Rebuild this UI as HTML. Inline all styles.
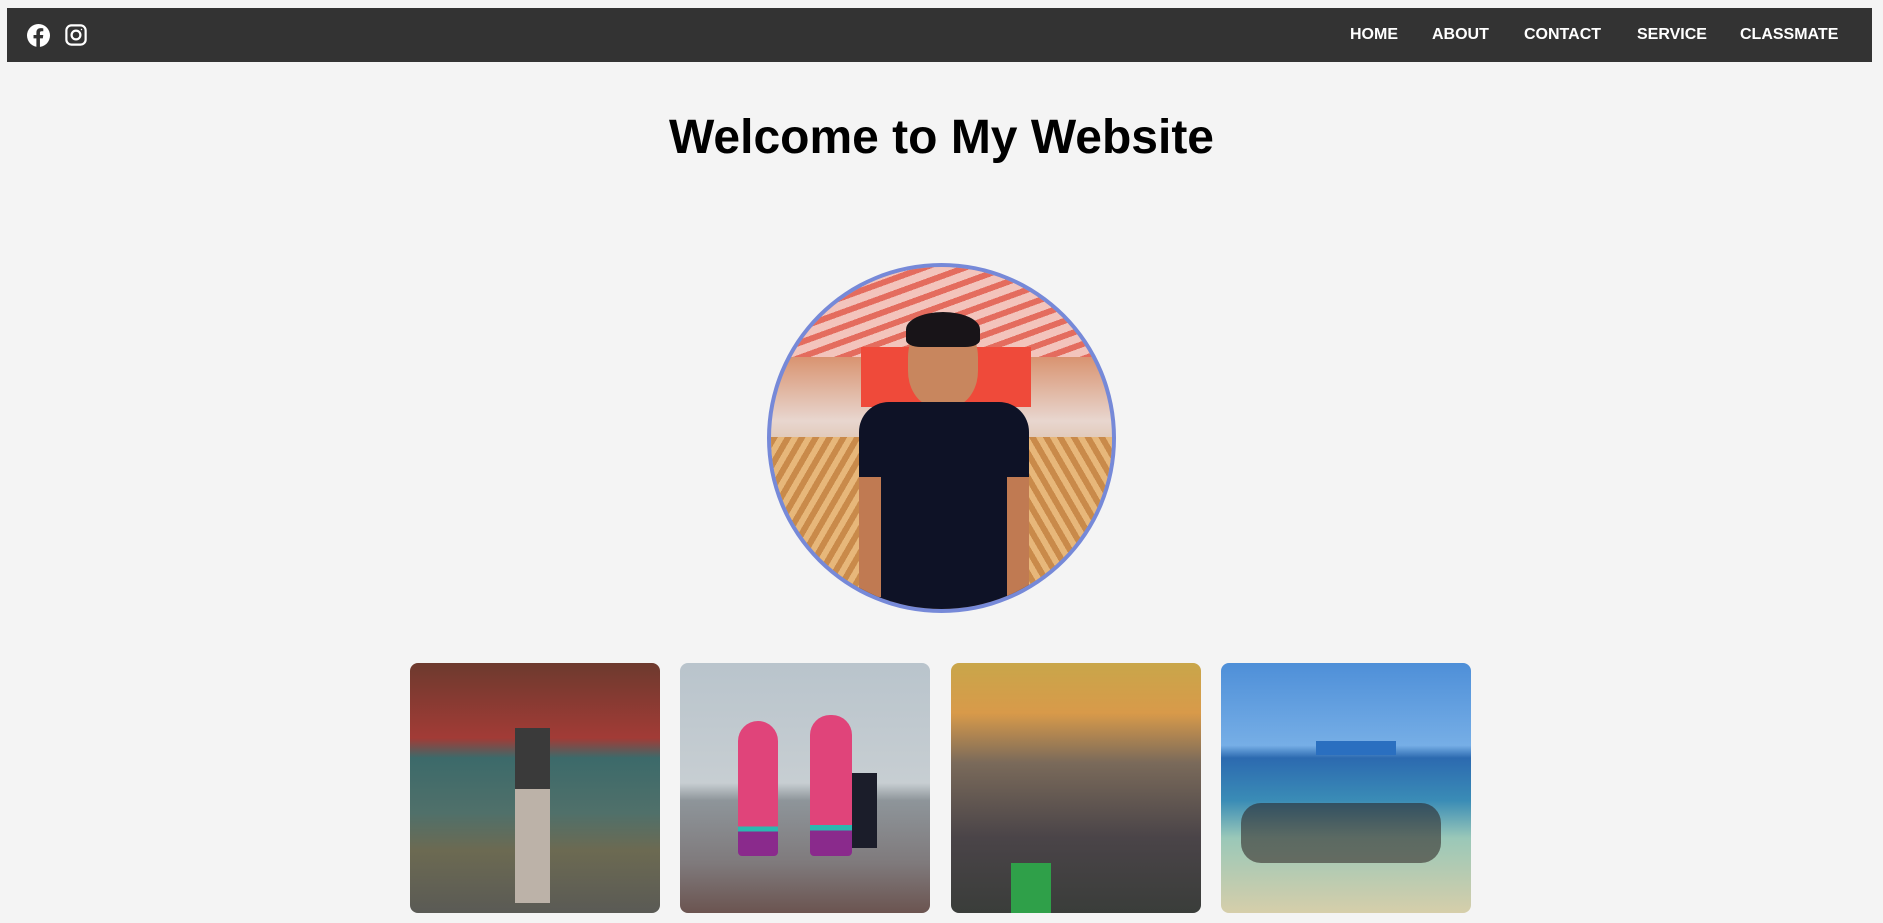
<!DOCTYPE html>
<html><head><meta charset="utf-8">
<style>
*{margin:0;padding:0;box-sizing:border-box}
html,body{width:1883px;height:923px;overflow:hidden;background:#f4f4f4;font-family:"Liberation Sans",Arial,sans-serif}
.nav{position:absolute;left:7px;top:8px;width:1865px;height:54px;background:#333}
.nav a{position:absolute;top:0;line-height:54px;color:#fff;font-weight:bold;font-size:16px;text-decoration:none}
h1{position:absolute;top:108px;left:0;width:1883px;text-align:center;font-size:48px;font-weight:bold;color:#000;line-height:60px}
.circle{position:absolute;left:767px;top:263px;width:349px;height:350px;border-radius:50%;border:4px solid #7689d8;overflow:hidden;background:linear-gradient(180deg,#e9a89a 0%,#d88f6a 25%,#e8d6cf 45%,#c99b66 70%,#b88a55 100%)}
.g{position:absolute;top:663px;width:250px;height:250px;border-radius:8px;overflow:hidden}
</style></head><body>
<div class="nav">
 <svg style="position:absolute;left:20px;top:16px" width="23" height="23" viewBox="0 0 24 24"><circle cx="12" cy="12" r="12" fill="#fff"/><path d="M13.5 24V15h3l.5-3.5h-3.5V9.3c0-1 .3-1.7 1.8-1.7H17V4.5c-.4 0-1.5-.2-2.7-.2-2.7 0-4.5 1.6-4.5 4.6v2.6h-3V15h3v9z" fill="#333"/></svg>
 <svg style="position:absolute;left:58px;top:16px" width="22" height="22" viewBox="0 0 24 24" fill="none" stroke="#fff" stroke-width="2.4"><rect x="1.5" y="1.5" width="21" height="21" rx="5.5"/><circle cx="12" cy="12" r="4.8"/><circle cx="18" cy="6" r="0.8" fill="#fff" stroke="none"/></svg>
 <a style="left:1343px">HOME</a>
 <a style="left:1425px">ABOUT</a>
 <a style="left:1517px">CONTACT</a>
 <a style="left:1630px">SERVICE</a>
 <a style="left:1733px">CLASSMATE</a>
</div>
<h1>Welcome to My Website</h1>
<div class="circle">
 <div style="position:absolute;left:0;top:0;width:100%;height:90px;background:repeating-linear-gradient(160deg,#f3c4bc 0 8px,#e46c5e 8px 14px)"></div>
 <div style="position:absolute;left:90px;top:80px;width:170px;height:60px;background:#ef4a3a"></div>
 <div style="position:absolute;left:0;top:170px;width:90px;height:180px;background:repeating-linear-gradient(120deg,#c98a4a 0 6px,#e7b77a 6px 12px)"></div>
 <div style="position:absolute;right:0;top:170px;width:90px;height:180px;background:repeating-linear-gradient(60deg,#c98a4a 0 6px,#e7b77a 6px 12px)"></div>
 <div style="position:absolute;left:137px;top:50px;width:70px;height:90px;border-radius:45% 45% 40% 40%;background:#c8865e"></div>
 <div style="position:absolute;left:135px;top:45px;width:74px;height:35px;border-radius:50% 50% 20% 20%;background:#181418"></div>
 <div style="position:absolute;left:88px;top:135px;width:170px;height:220px;border-radius:30px 30px 0 0;background:#0e1226"></div>
 <div style="position:absolute;left:88px;top:210px;width:22px;height:120px;background:#c07a52"></div>
 <div style="position:absolute;left:236px;top:210px;width:22px;height:120px;background:#c07a52"></div>
</div>
<div class="g" style="left:410px;background:linear-gradient(180deg,#6d3a2e 0%,#a23b36 30%,#3c6a6a 38%,#50706a 60%,#6c6a52 75%,#5a5a55 100%)">
 <div style="position:absolute;left:105px;top:65px;width:35px;height:175px;background:linear-gradient(#3a3a3a 0 35%,#bcb2a8 35%)"></div>
</div>
<div class="g" style="left:680px;background:linear-gradient(180deg,#b9c4cc 0%,#c7ced2 48%,#8e959a 55%,#7f7a7c 80%,#6b5450 100%)">
 <div style="position:absolute;left:58px;top:58px;width:40px;height:135px;border-radius:20px 20px 4px 4px;background:linear-gradient(#e0447a 0 78%,#2bb8b0 78% 82%,#8a2a8c 82%)"></div>
 <div style="position:absolute;left:130px;top:52px;width:42px;height:141px;border-radius:20px 20px 4px 4px;background:linear-gradient(#e0447a 0 78%,#2bb8b0 78% 82%,#8a2a8c 82%)"></div>
 <div style="position:absolute;left:172px;top:110px;width:25px;height:75px;background:#1b1d2a"></div>
</div>
<div class="g" style="left:951px;background:linear-gradient(180deg,#c9a64a 0%,#d89a4a 20%,#7a6a5a 40%,#4a4448 70%,#3a3d3a 100%)">
 <div style="position:absolute;left:60px;top:200px;width:40px;height:50px;background:#2fa049"></div>
</div>
<div class="g" style="left:1221px;background:linear-gradient(180deg,#4e8fd8 0%,#76aee6 33%,#2c6ab0 38%,#3a8cb6 55%,#9ac8b8 70%,#d6ceaa 100%)">
 <div style="position:absolute;left:95px;top:78px;width:80px;height:14px;background:#2a6fc0"></div>
 <div style="position:absolute;left:20px;top:140px;width:200px;height:60px;background:rgba(40,30,30,.55);border-radius:20px"></div>
</div>
</body></html>
